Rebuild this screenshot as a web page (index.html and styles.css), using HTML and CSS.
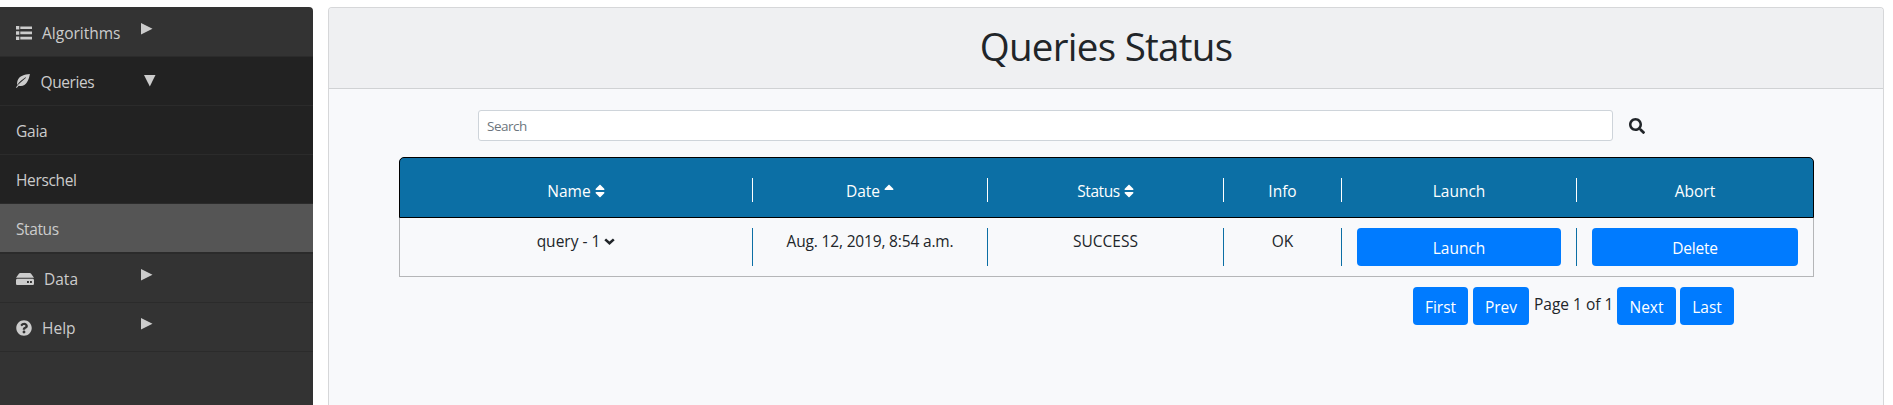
FILE: index.html
```html
<!DOCTYPE html>
<html lang="en">
<head>
<meta charset="utf-8">
<title>Queries Status</title>
<link rel="stylesheet" href="styles.css">
</head>
<body>
<div class="layout">
<nav class="sidebar">
  <a class="item"><span class="entry"><svg class="icon" width="16" height="14" viewBox="0 0 16 14"><path d="M0 0h3.300v3.500H0zM0 5.200h3.300v3.500H0zM0 10.400h3.300v3.500H0zM4.300 .4h11.700v2.700H4.300zM4.300 5.600h11.700v2.700H4.300zM4.300 10.800h11.700v2.700H4.300z"/></svg><span class="t-alg">Algorithms</span></span><svg class="arrow" width="12" height="12" viewBox="0 0 12 12"><path d="M0 0l11.500 5.800L0 11.500z"/></svg></a>
  <div class="sub">
    <a class="item"><span class="entry"><svg class="icon leaf" width="14" height="14" viewBox="0 0 14 14"><path d="M13.900 0C8.500.2 3.200 2 1.600 6.500c-.6 1.700-.6 3.500-.3 4.600C3 8 6.500 5.500 9.600 3.300l.4.500C6.500 6.700 3 9.500 0 13.200l.7.700 2-2.200c3.800.8 6.600-.5 8.300-3.400C12.600 5.600 13.500 2.800 13.900 0z"/></svg><span class="t-que">Queries</span></span><svg class="arrow down" width="12" height="12" viewBox="0 0 12 12"><path d="M0 0h11.500L5.800 11.500z"/></svg></a>
    <a class="item"><span class="t-gaia">Gaia</span></a>
    <a class="item"><span class="t-her">Herschel</span></a>
    <a class="item active"><span class="t-sta">Status</span></a>
  </div>
  <a class="item"><span class="entry"><svg class="icon" width="18" height="12" viewBox="0 0 18 12"><path fill-rule="evenodd" d="M4.200 0h9.600c.6 0 1 .3 1.300.7L18 4.800H0L2.900.7C3.200.3 3.600 0 4.200 0zM1.500 5.800h15c1 0 1.500.6 1.500 1.500v3.200c0 1-.6 1.500-1.500 1.500h-15C.6 12 0 11.500 0 10.500V7.300c0-1 .6-1.500 1.500-1.500zM11 8v1.900h1.900V8zM14 8v1.900h1.900V8z"/></svg><span class="t-data">Data</span></span><svg class="arrow" width="12" height="12" viewBox="0 0 12 12"><path d="M0 0l11.500 5.800L0 11.500z"/></svg></a>
  <a class="item"><span class="entry"><svg class="icon" width="16" height="16" viewBox="0 0 512 512"><path d="M504 256c0 136.997-111.043 248-248 248S8 392.997 8 256C8 119.083 119.043 8 256 8s248 111.083 248 248zM262.655 90c-54.497 0-89.255 22.957-116.549 63.758-3.536 5.286-2.353 12.415 2.715 16.258l34.699 26.310c5.205 3.947 12.621 3.008 16.665-2.122 17.864-22.658 30.113-35.797 57.303-35.797 20.429 0 45.698 13.148 45.698 32.958 0 14.976-12.363 22.667-32.534 33.976C247.128 238.528 216 254.941 216 296v4c0 6.627 5.373 12 12 12h56c6.627 0 12-5.373 12-12v-1.333c0-28.462 83.186-29.647 83.186-106.667 0-58.002-60.165-102-116.531-102zM256 338c-25.365 0-46 20.635-46 46 0 25.364 20.635 46 46 46s46-20.636 46-46c0-25.365-20.635-46-46-46z"/></svg><span class="t-help">Help</span></span><svg class="arrow" width="12" height="12" viewBox="0 0 12 12"><path d="M0 0l11.500 5.800L0 11.500z"/></svg></a>
</nav>
<main class="card">
  <header class="card-header"><h1>Queries Status</h1></header>
  <div class="search">
    <input type="text" placeholder="Search">
    <svg width="16" height="16" viewBox="0 0 512 512"><path d="M505 442.700L405.300 343c-4.500-4.500-10.600-7-17-7H372c27.600-35.300 44-79.700 44-128C416 93.100 322.900 0 208 0S0 93.100 0 208s93.100 208 208 208c48.300 0 92.700-16.400 128-44v16.300c0 6.400 2.500 12.500 7 17l99.700 99.700c9.400 9.400 24.600 9.400 33.900 0l28.300-28.300c9.400-9.400 9.400-24.600.1-34zM208 336c-70.700 0-128-57.200-128-128 0-70.700 57.200-128 128-128 70.700 0 128 57.200 128 128 0 70.700-57.200 128-128 128z"/></svg>
  </div>
  <section class="table">
    <div class="row head">
      <div class="cell"><span>Name</span><svg class="sort" width="10" height="16" viewBox="0 0 320 512"><path d="M41 288h238c21.400 0 32.100 25.900 17 41L177 448c-9.400 9.400-24.600 9.400-33.900 0L24 329c-15.100-15.100-4.400-41 17-41zm255-105L177 64c-9.400-9.400-24.600-9.400-33.900 0L24 183c-15.100 15.100-4.400 41 17 41h238c21.400 0 32.100-25.900 17-41z"/></svg></div>
      <div class="cell"><span class="t-date">Date</span><svg class="sort" width="10" height="16" viewBox="0 0 320 512"><path d="M279 224H41c-21.400 0-32.100-25.900-17-41L143 64c9.400-9.400 24.600-9.400 33.900 0l119 119c15.200 15.100 4.500 41-16.900 41z"/></svg></div>
      <div class="cell"><span class="t-sta">Status</span><svg class="sort" width="10" height="16" viewBox="0 0 320 512"><path d="M41 288h238c21.400 0 32.100 25.900 17 41L177 448c-9.400 9.400-24.600 9.400-33.900 0L24 329c-15.100-15.100-4.400-41 17-41zm255-105L177 64c-9.400-9.400-24.600-9.400-33.900 0L24 183c-15.100 15.100-4.400 41 17 41h238c21.400 0 32.100-25.900 17-41z"/></svg></div>
      <div class="cell"><span>Info</span></div>
      <div class="cell"><span>Launch</span></div>
      <div class="cell"><span>Abort</span></div>
    </div>
    <div class="row body">
      <div class="cell"><span>query - 1</span><svg class="chev" width="11" height="7" viewBox="0 0 11 7"><path d="M1.200 1.400L5.500 5.200l4.300-3.800" fill="none" stroke="#212529" stroke-width="2.600"/></svg></div>
      <div class="cell"><span class="t-aug">Aug. 12, 2019, 8:54 a.m.</span></div>
      <div class="cell"><span>SUCCESS</span></div>
      <div class="cell"><span>OK</span></div>
      <div class="cell"><button class="btn">Launch</button></div>
      <div class="cell"><button class="btn t-del">Delete</button></div>
    </div>
  </section>
  <footer class="pager">
    <button class="btn first">First</button>
    <button class="btn prev">Prev</button>
    <span class="page">Page 1 of 1</span>
    <button class="btn next">Next</button>
    <button class="btn last">Last</button>
  </footer>
</main>
</div>
</body>
</html>
```

FILE: styles.css
```css
* { box-sizing: border-box; }
body {
  margin: 0;
  height: 405px;
  overflow: hidden;
  background: #fff;
  color: #212529;
  font: 15.500px/24px "Open Sans", "Noto Sans", sans-serif;
}
.layout { display: flex; gap: 15px; height: 405px; padding-top: 7px; }
.sidebar {
  width: 313px;
  flex: none;
  padding-top: 1px;
  background: #333;
  color: #ccc;
  border-top-right-radius: 4px;
}
.sub { background: #222; border-bottom: 1px solid #2b2b2b; }
.item {
  display: flex;
  align-items: center;
  height: 49px;
  padding: 1px 0 0 16px;
  border-bottom: 1px solid #2b2b2b;
  white-space: nowrap;
}
.item.active { background: #555; }
.entry { display: flex; align-items: center; gap: 10px; width: 125px; }
.icon { fill: #ccc; flex: none; }
.leaf { margin-top: -1px; }
.arrow { fill: #ccc; margin-top: -7px; }
.arrow.down { margin: -1px 0 0 2.500px; }
.t-que { letter-spacing: -.4px; margin-left: .5px; }
.t-gaia { letter-spacing: -.25px; }
.t-her { letter-spacing: -.35px; }
.t-sta { letter-spacing: -.4px; }

.card {
  width: 1556px;
  height: 398px;
  background: #f8f9fb;
  border: 1px solid #d6d7d9;
  border-bottom: 0;
  border-radius: 4px 4px 0 0;
}
.card-header {
  height: 81px;
  background: #eff0f2;
  border-bottom: 1px solid #d0d2d4;
  border-radius: 3px 3px 0 0;
  text-align: center;
}
h1 {
  margin: 0;
  padding-top: 13px;
  font-size: 38.500px;
  line-height: 50px;
  font-weight: 400;
  letter-spacing: -.7px;
}
.search { display: flex; align-items: center; gap: 16px; margin: 21px 0 0 149px; }
.search input {
  width: 1135px;
  height: 31px;
  padding: 0 8px;
  border: 1px solid #ced4da;
  border-radius: 3px;
  background: #fff;
  font: 13.500px "Open Sans", sans-serif;
}
.search svg { fill: #212529; }
.search input::placeholder { color: #6c757d; opacity: 1; letter-spacing: -.5px; }
.table { width: 1415px; margin: 16px 0 0 70px; }
.row { display: grid; grid-template-columns: 353px 235px 236px 118px 235px 236px; }
.head {
  height: 61px;
  padding-top: 20px;
  background: #0c6fa5;
  border: 1px solid #000;
  border-radius: 5px 5px 0 0;
  color: #fff;
}
.body { height: 59px; padding-top: 10px; border: 1px solid #b5b6b8; border-top: 0; }
.cell {
  display: flex;
  justify-content: center;
  gap: 4px;
  height: 24px;
  border-right: 1px solid #fff;
  white-space: nowrap;
}
.head .cell { padding-top: 1px; }
.body .cell { height: 38px; padding: 1px 15px 0; border-color: #0c6fa5; }
.body .cell:has(.btn) { padding-top: 0; }
.row .cell:last-child { border-right: 0; }
.sort { fill: #fff; margin-top: 4px; }
.chev { margin-top: 9px; }
.t-aug { letter-spacing: -.17px; }
.btn {
  display: flex;
  align-items: center;
  justify-content: center;
  width: 100%;
  height: 38px;
  padding: 2px 0 0;
  border: 0;
  border-radius: 4px;
  background: #007bff;
  color: #fff;
  font: inherit;
}
.t-del { letter-spacing: -.2px; }
.pager { display: flex; gap: 5px; margin: 10px 0 0 1084px; }
.pager .btn { flex: none; }
.first { width: 55px; }
.prev { width: 56px; }
.next { width: 59px; }
.last { width: 54px; margin-left: -1px; }
.page { width: 78px; padding-top: 5px; white-space: nowrap; }
```
